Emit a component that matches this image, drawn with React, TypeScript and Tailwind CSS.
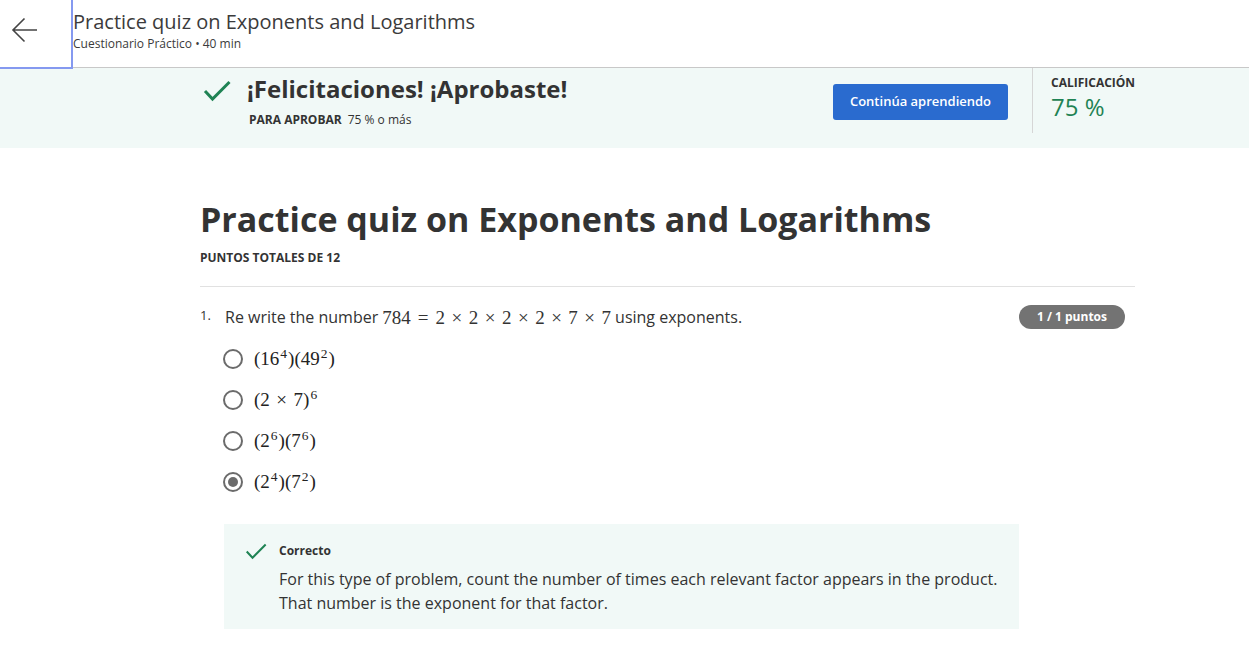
import { ReactNode } from "react"

const serif = "font-['Liberation_Serif',serif] text-[19px] leading-none"

function Sup({ children }: { children: ReactNode }) {
  return <span className="relative -top-[7px] ml-[1px] mr-[1px] text-[13.5px]">{children}</span>
}

function Op({ children, wide }: { children: ReactNode; wide?: boolean }) {
  return <span className={wide ? "mx-[7px]" : "mx-[6.5px]"}>{children}</span>
}

function Check({ w = 28, h = 22, sw = 3 }: { w?: number; h?: number; sw?: number }) {
  return (
    <svg width={w} height={h} viewBox="0 0 28 22" fill="none">
      <polyline points="2,11 9.5,19 26.5,2" stroke="#1f8354" strokeWidth={sw} />
    </svg>
  )
}

function Radio({ checked }: { checked?: boolean }) {
  return (
    <div className="w-5 h-5 rounded-full border-2 border-[#6b6b6b] flex items-center justify-center shrink-0">
      {checked && <div className="w-[10px] h-[10px] rounded-full bg-[#6b6b6b]" />}
    </div>
  )
}

const options: ReactNode[] = [
  <>
    (16<Sup>4</Sup>)(49<Sup>2</Sup>)
  </>,
  <>
    (2<Op>×</Op>7)<Sup>6</Sup>
  </>,
  <>
    (2<Sup>6</Sup>)(7<Sup>6</Sup>)
  </>,
  <>
    (2<Sup>4</Sup>)(7<Sup>2</Sup>)
  </>,
]

export default function App() {
  return (
    <div className="min-h-screen bg-white text-[#333] font-['Open_Sans',sans-serif]">
      {/* Header */}
      <header className="flex items-start h-[68px] border-b border-[#c8c8c8]">
        <button className="relative z-10 w-[73px] h-[69px] shrink-0 flex items-center pl-[11px] pb-[8px] border-r-2 border-b-2 border-[#8599f0] bg-white">
          <svg width="27" height="26" viewBox="0 0 27 26" fill="none">
            <path d="M26 13H2M13.5 1.5L2 13l11.5 11.5" stroke="#444" strokeWidth="1.6" />
          </svg>
        </button>
        <div className="pt-[8px]">
          <h1 className="text-[20px] leading-[28px] text-[#3b3b3b]">Practice quiz on Exponents and Logarithms</h1>
          <p className="text-[12px] leading-[16px] text-[#3b3b3b]">Cuestionario Práctico • 40 min</p>
        </div>
      </header>

      {/* Result banner */}
      <section className="bg-[#f1f9f7] h-[80px]">
        <div className="flex items-start pl-[200px]">
          <div className="flex-1 flex items-start pt-[5px]">
            <div className="ml-[3px] mt-[7px] w-[28px]">
              <Check />
            </div>
            <div className="ml-[16px]">
              <h2 className="text-[24px] leading-[32px] font-bold text-[#333]">¡Felicitaciones! ¡Aprobaste!</h2>
              <p className="mt-[7px] ml-[2px] text-[12px] leading-[16px]">
                <span className="font-bold">PARA APROBAR</span>
                <span className="ml-[6px]">75 % o más</span>
              </p>
            </div>
          </div>
          <button className="mt-[16px] w-[175px] h-[36px] rounded-[3px] bg-[#2a6bcf] text-white text-[13px] font-semibold">
            Continúa aprendiendo
          </button>
          <div className="ml-[24px] w-[217px] h-[65px] border-l border-[#d6d6d6] pl-[18px] pt-[7px]">
            <div className="text-[12px] leading-[16px] font-bold text-[#333]">CALIFICACIÓN</div>
            <div className="text-[24px] leading-[32px] text-[#1f8354]">75 %</div>
          </div>
        </div>
      </section>

      {/* Quiz body */}
      <main className="ml-[200px] w-[935px] pt-[48px]">
        <h1 className="text-[34px] leading-[46px] font-bold text-[#333]">Practice quiz on Exponents and Logarithms</h1>
        <p className="mt-[8px] text-[12px] leading-[16px] font-bold">PUNTOS TOTALES DE 12</p>
        <div className="mt-[20px] border-t border-[#e1e1e1]" />

        <div className="mt-[18px] flex items-center">
          <span className="w-[25px] text-[13px] leading-[24px] self-start -mt-[2px]">1.</span>
          <p className="flex-1 text-[16px] leading-[24px] flex items-center">
            <span>Re write the number</span>
            <span className={`${serif} mx-[4px]`}>
              784<Op wide>=</Op>2<Op>×</Op>2<Op>×</Op>2<Op>×</Op>2<Op>×</Op>7<Op>×</Op>7
            </span>
            <span>using exponents.</span>
          </p>
          <span className="mr-[10px] w-[106px] h-[24px] rounded-full bg-[#737373] text-white text-[12px] font-bold flex items-center justify-center">
            1 / 1 puntos
          </span>
        </div>

        <div className="mt-[9px] ml-[23px] flex flex-col">
          {options.map((o, i) => (
            <label key={i} className="h-[41px] flex items-center gap-[11px]">
              <Radio checked={i === 3} />
              <span className={`${serif} text-[#222]`}>{o}</span>
            </label>
          ))}
        </div>

        <div className="mt-[22px] ml-[24px] w-[795px] bg-[#f1f9f7] pt-[19px] pb-[14px] pl-[21px] pr-[16px]">
          <div className="flex items-center">
            <div className="w-[22px] h-[16px] flex items-center">
              <Check w={22} h={17} sw={2.6} />
            </div>
            <span className="ml-[12px] text-[12px] leading-[16px] font-bold">Correcto</span>
          </div>
          <p className="mt-[8px] ml-[34px] text-[16px] leading-[24px] text-[#333]">
            For this type of problem, count the number of times each relevant factor appears in the product.
            <br />
            That number is the exponent for that factor.
          </p>
        </div>
      </main>
    </div>
  )
}
